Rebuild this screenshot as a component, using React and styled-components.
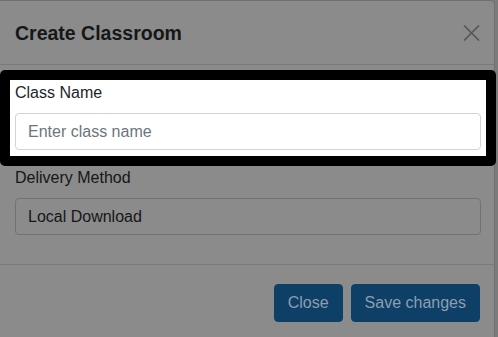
import React from "react";
import styled, { createGlobalStyle } from "styled-components";

const Global = createGlobalStyle`
  html, body { margin: 0; padding: 0; }
  body {
    background: #7b7b7b;
    font-family: "Liberation Sans", Arial, sans-serif;
    overflow: hidden;
  }
`;

const Modal = styled.div`
  position: relative;
  width: 495px;
  height: 360px;
  background: #8b8b8b;
  border: 1px solid #6f6f6f;
  border-left: none;
  border-radius: 0 5px 5px 0;
  display: flex;
  flex-direction: column;
  box-sizing: border-box;
`;

const Header = styled.div`
  height: 62px;
  display: flex;
  align-items: center;
  justify-content: space-between;
  padding: 1px 14px 0 15px;
  border-bottom: 1px solid #7a7a7a;
`;

const Title = styled.h5`
  margin: 0;
  font-size: 19.5px;
  font-weight: 700;
  color: #161718;
  line-height: 30px;
`;

const CloseX = styled.button`
  border: 0;
  background: none;
  padding: 0;
  width: 18px;
  height: 18px;
  display: flex;
  align-items: center;
  justify-content: center;
`;

const Body = styled.div`
  padding: 16px 13px 29px 15px;
  display: flex;
  flex-direction: column;
  gap: 16px;
  border-bottom: 1px solid #7a7a7a;
`;

const Group = styled.div`
  position: relative;
  z-index: 0;
  display: flex;
  flex-direction: column;
  gap: 8px;
  &::before {
    content: "";
    display: ${(p) => (p.$highlight ? "block" : "none")};
    position: absolute;
    z-index: -1;
    top: -11px;
    bottom: -16px;
    left: -15px;
    right: -15px;
    background: #ffffff;
    border: 10px solid #000;
    border-radius: 5px;
  }
`;

const Label = styled.label`
  font-size: 16px;
  line-height: 24px;
  color: ${(p) => (p.$highlight ? "#212529" : "#151617")};
`;

const Field = styled.div`
  height: 37px;
  box-sizing: border-box;
  border: 1px solid ${(p) => (p.$highlight ? "#ced4da" : "#707274")};
  border-radius: 4px;
  padding: 0 12px;
  display: flex;
  align-items: center;
  font-size: 16px;
  color: ${(p) => (p.$placeholder ? "#6c757d" : "#151617")};
  background: ${(p) => (p.$highlight ? "#ffffff" : "transparent")};
`;

const Footer = styled.div`
  display: flex;
  justify-content: flex-end;
  gap: 8px;
  padding: 19px 14px 0 0;
`;

const Button = styled.button`
  height: 38px;
  padding: 0 13px;
  border: 1px solid #0e3f67;
  border-radius: 4px;
  background: #0e3f67;
  color: #8c9eb1;
  font-family: "Liberation Sans", Arial, sans-serif;
  font-size: 16px;
`;

export default function App() {
  return (
    <>
      <Global />
      <Modal>
        <Header>
          <Title>Create Classroom</Title>
          <CloseX aria-label="Close">
            <svg width="17" height="16" viewBox="0 0 17 16">
              <path d="M1 0.5 L16 15.5 M16 0.5 L1 15.5" stroke="#565656" strokeWidth="1.6" fill="none" />
            </svg>
          </CloseX>
        </Header>
        <Body>
          <Group $highlight>
            <Label $highlight>Class Name</Label>
            <Field $highlight $placeholder>Enter class name</Field>
          </Group>
          <Group>
            <Label>Delivery Method</Label>
            <Field>Local Download</Field>
          </Group>
        </Body>
        <Footer>
          <Button>Close</Button>
          <Button>Save changes</Button>
        </Footer>
      </Modal>
    </>
  );
}
